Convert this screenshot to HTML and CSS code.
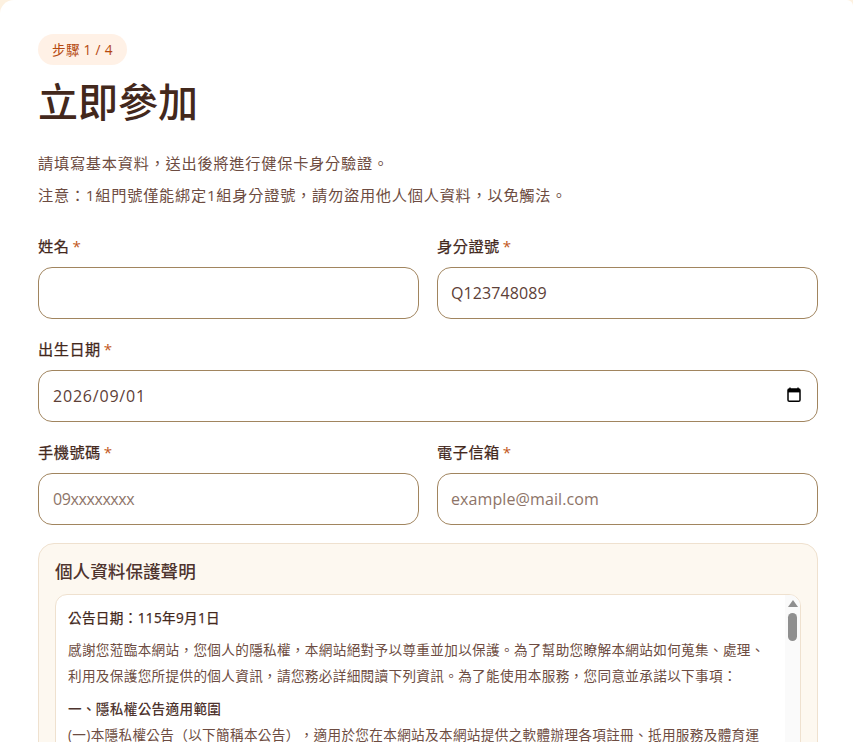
FILE: index.html
```html
<!DOCTYPE html>
<html lang="zh-Hant">
<head>
<meta charset="utf-8">
<title>立即參加</title>
<link rel="stylesheet" href="styles.css">
</head>
<body>
<main class="card">
  <span class="step">步驟 1 / 4</span>
  <h1 class="title">立即參加</h1>
  <p class="lead">請填寫基本資料，送出後將進行健保卡身分驗證。</p>
  <p class="lead lead-note">注意：1組門號僅能綁定1組身分證號，請勿盜用他人個人資料，以免觸法。</p>
  <form class="form">
    <div class="row">
      <label class="field"><span class="label">姓名<em>*</em></span><input class="input" type="text"></label>
      <label class="field"><span class="label">身分證號<em>*</em></span><input class="input" type="text" value="Q123748089"></label>
    </div>
    <label class="field"><span class="label">出生日期<em>*</em></span>
      <span class="date-wrap">
        <input class="input input-date" type="text" value="2026/09/01">
        <svg class="cal" viewBox="0 0 14 16" aria-hidden="true"><path d="M3 0.5v2M11 0.5v2" stroke="#000" stroke-width="1.3" fill="none"/><rect x="1" y="2" width="12" height="12.2" rx="1.3" fill="#fff" stroke="#000" stroke-width="1.5"/><rect x="1" y="2" width="12" height="3.4" fill="#000"/></svg>
      </span>
    </label>
    <div class="row">
      <label class="field"><span class="label">手機號碼<em>*</em></span><input class="input input-tel" type="tel" placeholder="09xxxxxxxx"></label>
      <label class="field"><span class="label">電子信箱<em>*</em></span><input class="input" type="email" placeholder="example@mail.com"></label>
    </div>
    <section class="notice">
      <h2 class="notice-title">個人資料保護聲明</h2>
      <div class="notice-box">
        <div class="notice-text">
          <p class="date">公告日期：115年9月1日</p>
          <p class="para">感謝您蒞臨本網站，您個人的隱私權，本網站絕對予以尊重並加以保護。為了幫助您瞭解本網站如何蒐集、處理、利用及保護您所提供的個人資訊，請您務必詳細閱讀下列資訊。為了能使用本服務，您同意並承諾以下事項：</p>
          <h3 class="sub">一、隱私權公告適用範圍</h3>
          <p class="item">(一)本隱私權公告（以下簡稱本公告），適用於您在本網站及本網站提供之軟體辦理各項註冊、抵用服務及體育運</p>
        </div>
        <div class="scrollbar" aria-hidden="true"><span class="arrow"></span><span class="thumb"></span></div>
      </div>
    </section>
  </form>
</main>
</body>
</html>
```
FILE: styles.css
```css
* { box-sizing: border-box; }
html, body { margin: 0; height: 742px; overflow: hidden; }
body {
  background: #fdf1e0;
  font-family: "Open Sans", "Noto Sans CJK TC", sans-serif;
  color: #43281c;
}
.card {
  background: #fff;
  height: 742px;
  padding: 34px 35px 0 38px;
  border-radius: 14px 6px 0 0;
}
.step {
  display: inline-block;
  height: 31px;
  padding: 0 14px;
  border-radius: 16px;
  background: #fff1e6;
  color: #b5480f;
  font-size: 13.6px;
  font-weight: 400;
  line-height: 31px;
  letter-spacing: .3px;
}
.title {
  margin: 7px 0 0;
  font-size: 40px;
  line-height: 60px;
  font-weight: 500;
  color: #43281c;
}
.lead {
  margin: 19px 0 0;
  font-size: 15.2px;
  line-height: 24px;
  color: #6d4c41;
  letter-spacing: .76px;
}
.lead-note { margin-top: 8px; }
.form {
  margin-top: 27px;
  display: flex;
  flex-direction: column;
  gap: 18px;
}
.row {
  display: grid;
  grid-template-columns: 1fr 1fr;
  gap: 18px;
}
.field { display: flex; flex-direction: column; gap: 9px; min-width: 0; }
.label {
  font-size: 15.2px;
  line-height: 24px;
  font-weight: 400;
  -webkit-text-stroke: .25px #43281c;
  color: #43281c;
  letter-spacing: .5px;
}
.label em { font-style: normal; color: #c2581b; margin-left: 3px; -webkit-text-stroke: 0; }
.date-wrap { position: relative; display: block; }
.cal {
  position: absolute;
  top: 17px;
  right: 17px;
  width: 14px;
  height: 16px;
}
.input {
  display: block;
  width: 100%;
  height: 52px;
  padding: 0 13px;
  border: 1px solid #a1855f;
  border-radius: 14px;
  background: #fff;
  font: inherit;
  font-size: 16px;
  letter-spacing: .1px;
  color: #5d4037;
  outline: none;
}
.input-date { padding: 0 14px; letter-spacing: .8px; }
.input-tel { padding: 0 14px; letter-spacing: -.4px; }
.input::placeholder { color: #8d7468; opacity: 1; }
.notice {
  background: #fdf8f0;
  border: 1px solid #efe1cf;
  border-radius: 16px;
  padding: 15px 16px 16px;
  height: 400px;
}
.notice-title {
  margin: 0 0 11px;
  font-size: 17.6px;
  line-height: 24px;
  font-weight: 500;
  color: #4e342e;
}
.notice-box {
  position: relative;
  height: 340px;
  background: #fff;
  border: 1px solid #efe1cf;
  border-radius: 12px;
  overflow: hidden;
}
.notice-text {
  padding: 10px 24px 0 12px;
  font-size: 13.6px;
  line-height: 26px;
  color: #6d4c41;
  letter-spacing: .34px;
  text-spacing-trim: space-all;
}
.notice-text p, .notice-text h3 { margin: 0; font-size: 13.6px; }
.date { font-weight: 400; -webkit-text-stroke: .25px #43281c; color: #43281c; }
.para { margin-top: 6px !important; }
.sub { margin-top: 7px !important; font-weight: 500; color: #4e342e; }
.scrollbar {
  position: absolute;
  top: 0;
  right: 0;
  bottom: 0;
  width: 15px;
  background: #fafafa;
}
.arrow {
  position: absolute;
  top: 5px;
  left: 3px;
  border-left: 5px solid transparent;
  border-right: 5px solid transparent;
  border-bottom: 7px solid #8f8f8f;
}
.thumb {
  position: absolute;
  top: 18px;
  left: 3px;
  width: 9px;
  height: 28px;
  border-radius: 5px;
  background: #8f8f8f;
}
```
